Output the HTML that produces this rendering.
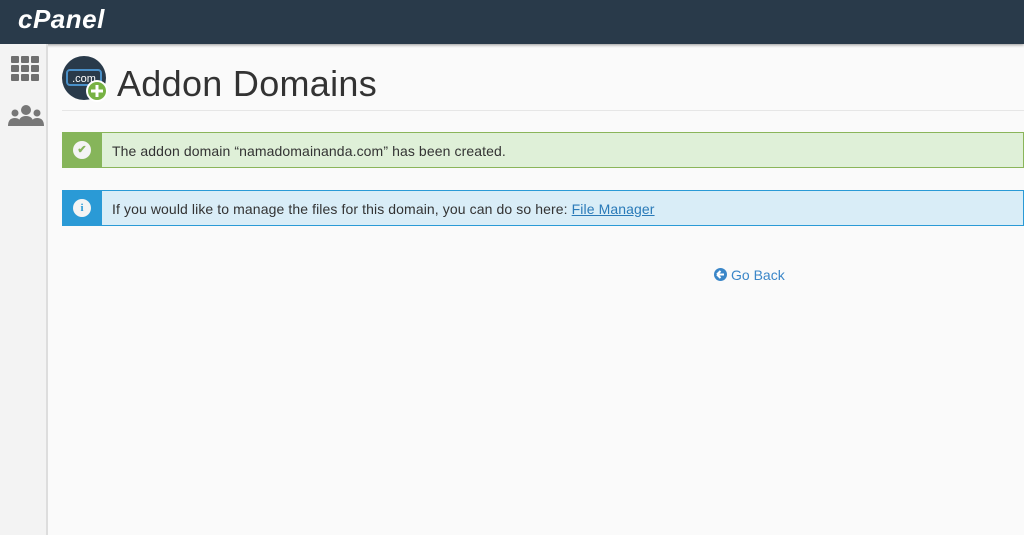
<!DOCTYPE html>
<html><head><style>
body{margin:0;width:1024px;height:535px;overflow:hidden;background:#fafafa;font-family:"Liberation Sans",sans-serif;position:relative}
.hdr{position:absolute;left:0;top:0;width:1024px;height:44px;background:#293a4a;box-shadow:0 1px 3px rgba(0,0,0,.4)}
.logo{position:absolute;left:18px;top:4px;color:#fff;font-size:26px;font-weight:bold;font-style:italic;letter-spacing:0.5px}
.side{position:absolute;left:0;top:44px;width:46px;height:491px;background:#f3f3f3;border-right:2px solid #ddd}
.alert{position:absolute;left:62px;width:962px;height:36px;box-sizing:border-box;font-size:14px;color:#333}
.strip{position:absolute;left:0;top:0;width:40px;height:100%}
.txt{position:absolute;left:49px;top:10px;letter-spacing:0.1px}
.ic{position:absolute;left:11px;top:9px;width:18px;height:18px;border-radius:50%;background:#f4f4f4;text-align:center;font-size:11px;line-height:18px;font-weight:bold}
</style></head><body>
<div class="hdr"><div class="logo">cPanel</div></div>
<div class="side">
<svg style="position:absolute;left:11px;top:12px" width="28" height="25"><g fill="#6f6f6f">
<rect x="0" y="0" width="8" height="7" rx="1"/><rect x="10" y="0" width="8" height="7" rx="1"/><rect x="20" y="0" width="8" height="7" rx="1"/>
<rect x="0" y="9" width="8" height="7" rx="1"/><rect x="10" y="9" width="8" height="7" rx="1"/><rect x="20" y="9" width="8" height="7" rx="1"/>
<rect x="0" y="18" width="8" height="7" rx="1"/><rect x="10" y="18" width="8" height="7" rx="1"/><rect x="20" y="18" width="8" height="7" rx="1"/></g></svg>
<svg style="position:absolute;left:8px;top:60px" width="36" height="22"><g fill="#777">
<circle cx="18" cy="6" r="5"/><path d="M10 22 q0-10 8-10 q8 0 8 10z"/>
<circle cx="7" cy="9" r="3.5"/><path d="M0 22 q0-8 7-8 q4 0 5 3 l-2 5z"/>
<circle cx="29" cy="9" r="3.5"/><path d="M36 22 q0-8-7-8 q-4 0-5 3 l2 5z"/></g></svg>
</div>
<svg style="position:absolute;left:62px;top:56px" width="48" height="48">
<circle cx="22" cy="22" r="22" fill="#293a4a"/>
<rect x="5" y="14" width="34" height="15" rx="3" fill="none" stroke="#4a90c8" stroke-width="2"/>
<text x="22" y="26" fill="#fff" font-size="11" text-anchor="middle" font-family="Liberation Sans">.com</text>
<circle cx="35" cy="35" r="11" fill="#fff"/><circle cx="35" cy="35" r="9" fill="#77b243"/>
<rect x="33.5" y="29" width="3" height="12" fill="#fff"/><rect x="29" y="33.5" width="12" height="3" fill="#fff"/>
</svg>
<div style="position:absolute;left:117px;top:63px;font-size:36px;color:#333;letter-spacing:0.3px">Addon Domains</div>
<div style="position:absolute;left:62px;top:110px;width:962px;border-top:1px solid #e6e6e6"></div>
<div class="alert" style="top:132px;background:#dff0d8;border:1px solid #8ab55a">
<div class="strip" style="background:#86b55a;left:-1px;top:-1px;height:36px"><div class="ic" style="color:#86b55a">✔</div></div>
<div class="txt">The addon domain “namadomainanda.com” has been created.</div></div>
<div class="alert" style="top:190px;background:#d9edf7;border:1px solid #2a9ad6">
<div class="strip" style="background:#2a9ad6;left:-1px;top:-1px;height:36px"><div class="ic" style="color:#2a9ad6;font-family:'Liberation Serif',serif">i</div></div>
<div class="txt">If you would like to manage the files for this domain, you can do so here: <span style="color:#2a7ab8;text-decoration:underline">File Manager</span></div></div>
<svg style="position:absolute;left:714px;top:268px" width="13" height="13"><circle cx="6.5" cy="6.5" r="6.5" fill="#3a86c8"/><path d="M3 6.5 L6.5 3 M3 6.5 L6.5 10 M3 6.5 H10" stroke="#fff" stroke-width="2" fill="none"/></svg>
<div style="position:absolute;left:731px;top:267px;font-size:14px;color:#3a86c8">Go Back</div>
</body></html>
